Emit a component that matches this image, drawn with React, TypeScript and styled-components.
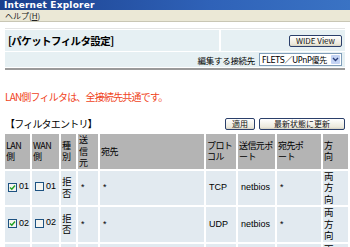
import styled, { createGlobalStyle } from 'styled-components';

const GlobalStyle = createGlobalStyle`
  html, body {
    margin: 0;
    padding: 0;
    background: #ffffff;
    overflow: hidden;
  }
  body {
    font-family: 'Noto Sans CJK JP', 'Liberation Sans', sans-serif;
    font-size: 10px;
    color: #000;
  }
`;

const Window = styled.div`
  width: 350px;
  height: 247px;
  overflow: hidden;
  display: flex;
  flex-direction: column;
`;

const TitleBar = styled.div`
  height: 12px;
  padding: 0 4px;
  display: flex;
  align-items: center;
  background: linear-gradient(to right, #1a3f8c, #2f62b8 60%, #3a73c4);
  color: #ffffff;
  font-family: 'DejaVu Sans', 'Liberation Sans', sans-serif;
  font-weight: bold;
  font-size: 9px;
  letter-spacing: 0.2px;
`;

const MenuBar = styled.div`
  height: 14px;
  padding: 0 5px;
  display: flex;
  align-items: center;
  background: #ebe8d6;
  border-bottom: 1px solid #c9c6b4;
  font-size: 8px;
  color: #222;
`;

const Underlined = styled.span`
  text-decoration: underline;
`;

const Page = styled.div`
  padding: 6px 5px 0;
  display: flex;
  flex-direction: column;
`;

const SettingsBox = styled.div`
  border-top: 1px solid #e4e4e4;
  padding-top: 1px;
  border-bottom: 2px solid #9a9a9a;
  display: flex;
  flex-direction: column;
  gap: 1px;
`;

const HeadRow = styled.div`
  display: flex;
  gap: 2px;
  height: 21px;
`;

const HeadCell = styled.div<{ $grow?: boolean }>`
  flex: ${(p) => (p.$grow ? 1 : '0 0 118px')};
  background: #e6f0f3;
  display: flex;
  align-items: center;
  justify-content: ${(p) => (p.$grow ? 'flex-start' : 'flex-end')};
  padding: 0 3px;
`;

const PageTitle = styled.div`
  font-size: 10.5px;
  font-weight: bold;
  letter-spacing: -0.6px;
`;

const TargetRow = styled.div`
  height: 15px;
  background: #e6f0f3;
  display: flex;
  align-items: center;
  justify-content: flex-end;
  gap: 4px;
  padding: 0 3px 0 0;
  margin-bottom: 1px;
`;

const Label = styled.span`
  font-size: 8.5px;
  letter-spacing: -0.3px;
`;

const XpButton = styled.button<{ $wide?: boolean }>`
  font-family: 'Noto Sans CJK JP', 'Liberation Sans', sans-serif;
  font-size: 8px;
  height: 12px;
  line-height: 10px;
  padding: 0 ${(p) => (p.$wide ? '14px' : '6px')};
  border: 1px solid #2b3f6a;
  border-radius: 2px;
  background: linear-gradient(#ffffff, #ece9dc 80%, #d6d2c2);
  color: #111;
  cursor: pointer;
`;

const SelectBox = styled.div`
  width: 81px;
  height: 11px;
  border: 1px solid #7f9db9;
  background: #fff;
  display: flex;
  align-items: center;
  font-size: 8px;
  font-family: 'DejaVu Sans', 'Noto Sans CJK JP', sans-serif;
  letter-spacing: -0.3px;
`;

const SelectText = styled.span`
  flex: 1;
  padding-left: 2px;
  white-space: nowrap;
  overflow: hidden;
`;

const SelectArrow = styled.span`
  width: 9px;
  height: 9px;
  margin-right: 1px;
  background: #c4d4f4;
  border-radius: 1px;
  display: flex;
  align-items: center;
  justify-content: center;
`;

const Notice = styled.div`
  margin-top: 19px;
  color: #f0441c;
  font-size: 10px;
  letter-spacing: -0.8px;
`;

const EntryBar = styled.div`
  margin-top: 13px;
  display: flex;
  align-items: center;
  gap: 4px;
  height: 13px;
`;

const EntryTitle = styled.div`
  flex: 1;
  font-size: 10px;
  letter-spacing: -0.8px;
`;

const Table = styled.table`
  margin: 2px -2px 0;
  border-collapse: separate;
  border-spacing: 2px;
  table-layout: fixed;
  width: 347px;
`;

const Th = styled.th`
  background: #b4b4b4;
  font-weight: normal;
  text-align: left;
  vertical-align: middle;
  padding: 0 1px;
  height: 34px;
  font-size: 9px;
  line-height: 11.5px;
  letter-spacing: -0.6px;
  white-space: nowrap;
`;

const Td = styled.td<{ $stack?: boolean }>`
  background: #e2eaf0;
  height: 34px;
  padding: 0 ${(p) => (p.$stack ? '1px' : '3px')};
  vertical-align: middle;
  font-family: ${(p) =>
    p.$stack ? "'Noto Sans CJK JP', sans-serif" : "'Liberation Sans', 'Noto Sans CJK JP', sans-serif"};
  font-size: ${(p) => (p.$stack ? '9.5px' : '9px')};
  line-height: 11.5px;
`;

const Check = styled.span`
  display: inline-flex;
  align-items: center;
  gap: 2px;
  font-family: 'Liberation Sans', sans-serif;
  font-size: 9px;
`;

const Box = styled.span`
  width: 7px;
  height: 7px;
  border: 1px solid #1d5281;
  background: #f4f4f0;
  display: inline-flex;
  align-items: center;
  justify-content: center;
`;

const cols = [25, 27, 15, 20, 104, 30, 37, 44, 25];

const headers = [
  ['LAN', '側'],
  ['WAN', '側'],
  ['種', '別'],
  ['送', '信', '元'],
  ['宛先'],
  ['プロト', 'コル'],
  ['送信元ポ', 'ート'],
  ['宛先ポ', 'ート'],
  ['方', '向'],
];

const rows = [
  { no: '01', proto: 'TCP' },
  { no: '02', proto: 'UDP' },
  { no: '03', proto: 'TCP' },
];

function Lines({ items }: { items: string[] }) {
  return (
    <>
      {items.map((t, i) => (
        <span key={i}>
          {i > 0 && <br />}
          {t}
        </span>
      ))}
    </>
  );
}

function CheckItem({ checked, label }: { checked: boolean; label: string }) {
  return (
    <Check>
      <Box>
        {checked && (
          <svg width="7" height="7" viewBox="0 0 7 7">
            <path d="M1 3.5 L2.8 5.3 L6 1.5" stroke="#21a121" strokeWidth="1.4" fill="none" />
          </svg>
        )}
      </Box>
      {label}
    </Check>
  );
}

export default function App() {
  return (
    <Window>
      <GlobalStyle />
      <TitleBar>Internet Explorer</TitleBar>
      <MenuBar>
        ヘルプ(<Underlined>H</Underlined>)
      </MenuBar>
      <Page>
        <SettingsBox>
          <HeadRow>
            <HeadCell $grow>
              <PageTitle>[パケットフィルタ設定]</PageTitle>
            </HeadCell>
            <HeadCell>
              <XpButton>WIDE View</XpButton>
            </HeadCell>
          </HeadRow>
          <TargetRow>
            <Label>編集する接続先</Label>
            <SelectBox>
              <SelectText>FLETS／UPnP優先</SelectText>
              <SelectArrow>
                <svg width="7" height="5" viewBox="0 0 7 5">
                  <path d="M1 1 L3.5 3.5 L6 1" stroke="#2a3f7a" strokeWidth="1.4" fill="none" />
                </svg>
              </SelectArrow>
            </SelectBox>
          </TargetRow>
        </SettingsBox>
        <Notice>LAN側フィルタは、全接続先共通です。</Notice>
        <EntryBar>
          <EntryTitle>【フィルタエントリ】</EntryTitle>
          <XpButton>適用</XpButton>
          <XpButton $wide>最新状態に更新</XpButton>
        </EntryBar>
        <Table>
          <colgroup>
            {cols.map((w, i) => (
              <col key={i} style={{ width: w }} />
            ))}
          </colgroup>
          <thead>
            <tr>
              {headers.map((h, i) => (
                <Th key={i}>
                  <Lines items={h} />
                </Th>
              ))}
            </tr>
          </thead>
          <tbody>
            {rows.map((r) => (
              <tr key={r.no}>
                <Td>
                  <CheckItem checked label={r.no} />
                </Td>
                <Td>
                  <CheckItem checked={false} label={r.no} />
                </Td>
                <Td $stack>
                  <Lines items={['拒', '否']} />
                </Td>
                <Td>*</Td>
                <Td>*</Td>
                <Td>{r.proto}</Td>
                <Td>netbios</Td>
                <Td>*</Td>
                <Td $stack>
                  <Lines items={['両', '方', '向']} />
                </Td>
              </tr>
            ))}
          </tbody>
        </Table>
      </Page>
    </Window>
  );
}
